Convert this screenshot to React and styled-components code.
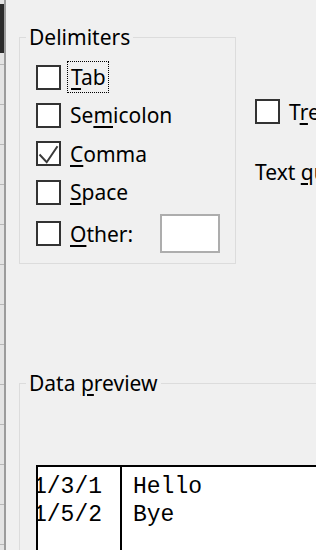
import React from "react";
import styled, { createGlobalStyle } from "styled-components";

const Global = createGlobalStyle`
  html, body { margin: 0; padding: 0; }
  body {
    width: 316px;
    height: 550px;
    overflow: hidden;
    background: #f0f0f0;
    font-family: "Noto Sans", "Open Sans", sans-serif;
    color: #000;
  }
`;

const Screen = styled.div`
  display: flex;
  width: 316px;
  height: 550px;
  overflow: hidden;
`;

const LeftStrip = styled.div`
  flex: 0 0 4px;
  border-right: 2px solid #9c9c9c;
  background:
    linear-gradient(#2b2b2b, #2b2b2b) 0 4px / 100% 49px no-repeat,
    repeating-linear-gradient(
      to bottom,
      #e4e4e4 0px,
      #e4e4e4 24px,
      #b8b8b8 24px,
      #b8b8b8 25px,
      #e4e4e4 25px,
      #e4e4e4 40px
    );
  background-color: #e4e4e4;
`;

const Dialog = styled.div`
  flex: 1;
  min-width: 0;
  padding: 24px 0 0 13px;
  display: flex;
  flex-direction: column;
  font-size: 21px;
`;

const TopRow = styled.div`
  display: flex;
  align-items: flex-start;
  gap: 19px;
`;

const Group = styled.fieldset`
  margin: 0;
  border: 1px solid #dcdcdc;
  padding: ${(p) => p.$pad || "8px 0 0 16px"};
  box-sizing: border-box;
  flex: 0 0 ${(p) => p.$w};
  height: ${(p) => p.$h};
`;

const Legend = styled.legend`
  padding: 0 3px;
  margin-left: -10px;
  line-height: 26px;
  font-size: 21px;
`;

const Key = styled.span`
  text-decoration: underline;
  text-decoration-thickness: 2px;
  text-underline-offset: 3px;
`;

const Rows = styled.div`
  display: flex;
  flex-direction: column;
`;

const Row = styled.div`
  display: flex;
  align-items: center;
  height: ${(p) => p.$h || "38.3px"};
  white-space: nowrap;
`;

const Box = styled.span`
  flex: 0 0 auto;
  width: 25px;
  height: 25px;
  box-sizing: border-box;
  border: 2px solid #333;
  background: #fff;
  display: flex;
  align-items: center;
  justify-content: center;
`;

const Label = styled.span`
  margin-left: ${(p) => (p.$focus ? "6px" : "9px")};
  padding: ${(p) => (p.$focus ? "0 2px 0 3px" : "0")};
  line-height: 30px;
  border: ${(p) => (p.$focus ? "1px dotted #000" : "none")};
`;

const OtherInput = styled.span`
  margin-left: 27px;
  width: 60px;
  height: 39px;
  box-sizing: border-box;
  border: 2px solid #adadad;
  background: #fff;
`;

const Side = styled.div`
  display: flex;
  flex-direction: column;
  padding-top: 75px;
  white-space: nowrap;
`;

const SideText = styled.div`
  margin-top: 33px;
  line-height: 30px;
`;

const PreviewGroup = styled.fieldset`
  margin: 106px 0 0 0;
  border: 1px solid #dcdcdc;
  padding: 69px 0 0 16px;
  width: 420px;
  height: 300px;
  box-sizing: border-box;
`;

const Table = styled.div`
  display: flex;
  border: 2px solid #000;
  border-right: none;
  background: #fff;
  height: 220px;
  font-family: "Liberation Mono", "Courier New", monospace;
  font-size: 23px;
  line-height: 28px;
`;

const Col = styled.div`
  flex: 0 0 ${(p) => p.$w};
  overflow: hidden;
  border-right: ${(p) => (p.$sep ? "2px solid #000" : "none")};
  padding-top: 6px;
  white-space: pre;
`;

const Cell = styled.div`
  margin-left: ${(p) => p.$off};
`;

function Check({ checked }) {
  return (
    <Box>
      {checked && (
        <svg width="21" height="21" viewBox="0 0 21 21">
          <polyline
            points="1.5,11.5 8.7,19.2 19.5,3.2"
            fill="none"
            stroke="#3a3a3a"
            strokeWidth="2"
          />
        </svg>
      )}
    </Box>
  );
}

export default function App() {
  return (
    <>
      <Global />
      <Screen>
        <LeftStrip />
        <Dialog>
          <TopRow>
            <Group $w="217px" $h="240px">
              <Legend>Delimiters</Legend>
              <Rows>
                <Row>
                  <Check />
                  <Label $focus>
                    <Key>T</Key>ab
                  </Label>
                </Row>
                <Row>
                  <Check />
                  <Label>
                    Se<Key>m</Key>icolon
                  </Label>
                </Row>
                <Row>
                  <Check checked />
                  <Label>
                    <Key>C</Key>omma
                  </Label>
                </Row>
                <Row>
                  <Check />
                  <Label>
                    <Key>S</Key>pace
                  </Label>
                </Row>
                <Row $h="45.5px">
                  <Check />
                  <Label>
                    <Key>O</Key>ther:
                  </Label>
                  <OtherInput />
                </Row>
              </Rows>
            </Group>
            <Side>
              <Row $h="25px">
                <Check />
                <Label>
                  T<Key>r</Key>eat consecutive delimiters as one
                </Label>
              </Row>
              <SideText>
                Text <Key>q</Key>ualifier:
              </SideText>
            </Side>
          </TopRow>
          <PreviewGroup>
            <Legend>
              Data <Key>p</Key>review
            </Legend>
            <Table>
              <Col $w="82px" $sep>
                <Cell $off="-5px">1/3/1</Cell>
                <Cell $off="-5px">1/5/2</Cell>
              </Col>
              <Col $w="300px">
                <Cell $off="11px">Hello</Cell>
                <Cell $off="11px">Bye</Cell>
              </Col>
            </Table>
          </PreviewGroup>
        </Dialog>
      </Screen>
    </>
  );
}
